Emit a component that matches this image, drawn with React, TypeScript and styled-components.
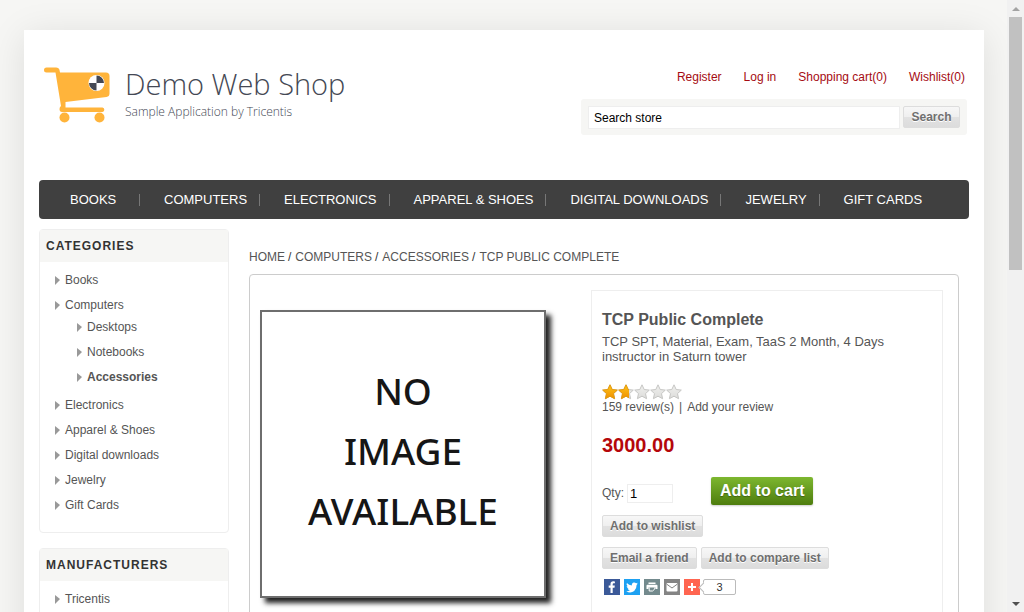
import React from "react";
import styled, { createGlobalStyle } from "styled-components";

const GlobalStyle = createGlobalStyle`
  * { box-sizing: border-box; }
  body {
    margin: 0;
    background: #f6f6f4;
    color: #555;
    font: 12px/15px "Liberation Sans", Arial, sans-serif;
  }
  a { color: inherit; text-decoration: none; }
  ul { list-style: none; margin: 0; padding: 0; }
  h1, h2, p { margin: 0; }
  button, input { font-family: inherit; }
`;

const Viewport = styled.div`
  display: flex;
  height: 100vh;
  overflow: hidden;
`;

const Page = styled.div`
  flex: 1;
  min-width: 0;
  padding: 30px 23px 0 24px;
`;

const Sheet = styled.div`
  min-height: 100%;
  padding: 0 15px;
  background: #fff;
  box-shadow: 0 5px 35px rgba(0, 0, 0, 0.1);
`;

const ScrollTrack = styled.div`
  position: relative;
  display: flex;
  flex-direction: column;
  align-items: center;
  flex: 0 0 17px;
  padding: 7px 0 6px;
  background: #f1f1f1;
`;

const ScrollThumb = styled.div`
  width: 13px;
  height: 253px;
  margin: 6px 0 auto;
  background: #c1c1c1;
`;

const Header = styled.header`
  display: flex;
  justify-content: space-between;
  height: 150px;
  padding: 0 2px 0 5px;
`;

const LogoLink = styled.a`
  display: flex;
  align-items: flex-start;
  gap: 15px;
  padding-top: 36px;
`;

const LogoText = styled.span`
  display: flex;
  flex-direction: column;
  font-family: "Open Sans", sans-serif;
  font-weight: 300;
`;

const LogoName = styled.span`
  font-size: 29px;
  line-height: 36px;
  color: #444854;
`;

const LogoTagline = styled.span`
  font-size: 12px;
  line-height: 20px;
  color: #444854;
`;

const HeaderTools = styled.div`
  flex: 0 0 386px;
  padding-top: 40px;
`;

const HeaderLinks = styled.ul`
  display: flex;
  justify-content: flex-end;
  gap: 22px;
  padding-right: 2px;
  color: #a50b12;
`;

const SearchForm = styled.form`
  display: flex;
  gap: 3px;
  margin-top: 14px;
  padding: 7px 7px 6px;
  background: #f6f6f4;
  border-radius: 3px;
`;

const SearchInput = styled.input`
  flex: 1;
  min-width: 0;
  height: 23px;
  margin: 0;
  padding: 0 5px;
  border: 1px solid #eee;
  background: #fff;
  color: #000;
  font-size: 12px;
`;

const GreyButton = styled.button`
  height: 22px;
  padding: 0 7px 1px;
  border: 1px solid #ddd;
  border-radius: 2px;
  background: linear-gradient(#f7f7f7, #efefef 49%, #e2e2e2 51%, #dcdcdc);
  color: #6f6f6f;
  font-size: 12px;
  font-weight: bold;
  text-shadow: 0 1px 0 #fff;
  white-space: nowrap;
`;

const SearchButton = styled(GreyButton)`
  width: 57px;
`;

const NavBar = styled.nav`
  padding: 0 7px;
  border-radius: 4px;
  background: #404040;
`;

const NavList = styled.ul`
  display: flex;
  height: 39px;
  align-items: center;
`;

const NavItem = styled.li`
  min-width: 94px;
  padding: 0 12px 0 24px;
  border-right: 1px solid #777;
  color: #fff;
  font-size: 13px;
  line-height: 12px;
  text-transform: uppercase;
  white-space: nowrap;

  &:last-child { border-right: 0; }
`;

const Body = styled.div`
  display: flex;
  gap: 20px;
  padding: 10px 10px 0 0;
`;

const Sidebar = styled.aside`
  display: flex;
  flex-direction: column;
  flex: 0 0 190px;
  gap: 15px;
`;

const Block = styled.section`
  border: 1px solid #eee;
  border-radius: 4px;
`;

const BlockTitle = styled.h2`
  padding: 0 6px;
  background: #f6f6f4;
  color: #333;
  font-size: 12px;
  line-height: 32px;
  letter-spacing: 1px;
  text-transform: uppercase;
`;

const BlockList = styled.ul`
  padding: 6px 15px 14px;
`;

const SubList = styled.ul`
  margin: -3px 0 3px;
  padding-left: 22px;
`;

const SideLink = styled.a<{ $active?: boolean }>`
  display: flex;
  align-items: center;
  gap: 5px;
  line-height: 25px;
  font-weight: ${(p) => (p.$active ? "bold" : "normal")};

  &::before {
    content: "";
    border: solid transparent;
    border-width: 4px 0 5px 5px;
    border-left-color: #999;
  }
`;

const Main = styled.main`
  flex: 1;
  min-width: 0;
`;

const Breadcrumb = styled.ul`
  display: flex;
  gap: 3px;
  padding: 21px 0 9px;
  text-transform: uppercase;

  li + li::before {
    content: "/";
    margin-right: 4px;
    color: #333;
  }
`;

const ProductBox = styled.article`
  display: flex;
  justify-content: space-between;
  min-height: 420px;
  padding: 15px 15px 0 10px;
  border: 1px solid #ccc;
  border-radius: 4px;
`;

const Placeholder = styled.div`
  display: flex;
  flex-direction: column;
  justify-content: center;
  flex: 0 0 286px;
  height: 288px;
  margin-top: 20px;
  padding-bottom: 6px;
  border: 2px solid #6e6e6e;
  box-shadow: 5px 5px 5px #222;
  background: #fff;
  color: #161616;
  font: 500 37px/60px "Comic Sans MS", "Noto Sans", sans-serif;
  text-align: center;
`;

const Details = styled.div`
  flex: 0 0 352px;
  padding: 19px 10px;
  border: 1px solid #eee;
`;

const ProductName = styled.h1`
  font-size: 16px;
  line-height: 20px;
`;

const Description = styled.p`
  margin-top: 4px;
  font-size: 13px;
  line-height: 15px;
`;

const Stars = styled.svg`
  display: block;
  margin-top: 20px;
`;

const Reviews = styled.p`
  display: flex;
  gap: 5px;
`;

const Price = styled.p`
  margin-top: 18px;
  color: #b5070b;
  font-size: 20px;
  font-weight: bold;
  line-height: 24px;
`;

const CartRow = styled.div`
  display: flex;
  align-items: center;
  margin-top: 20px;
`;

const QtyInput = styled.input`
  width: 46px;
  height: 19px;
  margin: 4px 38px 0 3px;
  padding: 0 2px;
  border: 1px solid #eee;
  color: #000;
  font-size: 13px;
`;

const QtyLabel = styled.label`
  padding-top: 4px;
`;

const CartButton = styled.button`
  height: 28px;
  padding: 0 9px 1px;
  border: 0;
  border-radius: 2px;
  background: linear-gradient(#7db72f, #4e7d0e);
  color: #fff;
  font-size: 16px;
  font-weight: bold;
  text-shadow: 0 1px 1px rgba(0, 0, 0, 0.3);
  white-space: nowrap;
  box-shadow: 0 1px 2px rgba(0, 0, 0, 0.2);
`;

const ButtonRow = styled.div`
  display: flex;
  gap: 4px;
  margin-top: 10px;
`;

const ShareRow = styled.div`
  display: flex;
  gap: 4px;
  padding: 0 2px;
  margin-top: 10px;
`;

const ShareLink = styled.a<{ $color: string }>`
  width: 16px;
  height: 16px;
  background: ${(p) => p.$color};

  svg { display: block; }
`;

const ShareCount = styled.span`
  position: relative;
  width: 33px;
  height: 16px;
  margin-left: -1px;
  border: 1px solid #bbb;
  border-radius: 2px;
  color: #333;
  font-size: 11px;
  line-height: 15px;
  text-align: center;

  &::before {
    content: "";
    position: absolute;
    top: 4px;
    left: -4px;
    width: 6px;
    height: 6px;
    border: solid #bbb;
    border-width: 0 0 1px 1px;
    background: #fff;
    transform: rotate(45deg);
  }
`;

const CartLogo = () => (
  <svg width="66" height="58" viewBox="0 0 66 58" aria-hidden="true">
    <g fill="#ffb43b">
      <path d="M2.500 1.500H12Q15 1.500 15.500 4L16 6.500H62Q65.500 6.500 65.500 10V27.500Q65.500 30.500 62.500 31L21.500 36V41.500H58.500A2.300 2.300 0 0 1 58.500 46H18Q15.500 46 15.500 43Q15.500 41 17 40L11.500 6.500H2.500A2.500 2.500 0 0 1 2.500 1.500Z" />
      <circle cx="20.500" cy="51.500" r="5" />
      <circle cx="55.500" cy="51.500" r="5" />
    </g>
    <circle cx="52.500" cy="17" r="8" fill="#fff" />
    <path d="M52.500 17V9.500A7.500 7.500 0 0 1 60 17ZM52.500 17V24.500A7.500 7.500 0 0 1 45 17Z" fill="#444854" />
  </svg>
);

const STAR = "M8 .8L10.200 5.500L15.300 6.100L11.500 9.600L12.600 14.700L8 12.200L3.400 14.700L4.500 9.600L.7 6.100L5.800 5.500Z";

const StarRow = ({ fill, stroke }: { fill: string; stroke: string }) => (
  <g fill={fill} stroke={stroke} strokeWidth="1" strokeLinejoin="round">
    {[0, 16, 32, 48, 64].map((x) => (
      <path key={x} d={STAR} transform={`translate(${x} 0)`} />
    ))}
  </g>
);

const Rating = () => (
  <Stars width="80" height="16" viewBox="0 0 80 16" role="img" aria-label="Rating">
    <defs>
      <linearGradient id="gold" x1="0" y1="0" x2="0" y2="1">
        <stop offset="0" stopColor="#ffc61a" />
        <stop offset="1" stopColor="#ef8f00" />
      </linearGradient>
      <linearGradient id="silver" x1="0" y1="0" x2="0" y2="1">
        <stop offset="0" stopColor="#f0f0ee" />
        <stop offset="1" stopColor="#dcdcda" />
      </linearGradient>
      <clipPath id="score"><rect width="27" height="16" /></clipPath>
    </defs>
    <StarRow fill="url(#silver)" stroke="#c6c6c4" />
    <g clipPath="url(#score)"><StarRow fill="url(#gold)" stroke="#e59a0c" /></g>
  </Stars>
);

const shares = [
  {
    name: "Facebook", color: "#3b5998",
    art: <path fill="#fff" d="M8.700 14V8.700H10.500L10.800 6.600H8.700V5.300Q8.700 4.300 9.700 4.300H10.900V2.400Q10 2.200 9.200 2.200Q6.500 2.200 6.500 5V6.600H4.700V8.700H6.500V14Z" />,
  },
  {
    name: "Twitter", color: "#1da1f2",
    art: <path fill="#fff" d="M13.800 4.600Q13.200 4.900 12.500 5Q13.200 4.500 13.500 3.700Q12.800 4.100 12 4.200Q11.200 3.300 10 3.400Q7.600 3.800 7.800 6.500Q4.900 6.400 2.900 4Q1.900 6 3.700 7.300Q3.100 7.300 2.600 7Q2.700 8.900 4.600 9.500Q4.100 9.600 3.600 9.500Q4.100 11 5.900 11.200Q4.300 12.400 2.200 12.200Q6.500 14.700 10.200 12Q12.700 9.900 12.600 6Q13.300 5.500 13.800 4.600Z" />,
  },
  {
    name: "Print", color: "#738a8d",
    art: (
      <g>
        <path fill="#fff" d="M4.500 3.500H11.500V5H4.500ZM3.500 5.700H12.500Q13.500 5.700 13.500 6.700V10H11.500V8.500H4.500V10H2.500V6.700Q2.500 5.700 3.500 5.700Z" />
        <path fill="none" stroke="#fff" d="M5.200 8.500V12H8.500L10.800 10V8.500" />
      </g>
    ),
  },
  {
    name: "Email", color: "#848484",
    art: (
      <g>
        <rect x="2.500" y="4" width="11" height="8.500" rx="1" fill="#fff" />
        <path d="M2.500 5L8 9L13.500 5" fill="none" stroke="#848484" />
      </g>
    ),
  },
  {
    name: "More", color: "#ff6550",
    art: <path d="M8 4V12M4 8H12" stroke="#fff" strokeWidth="2" />,
  },
];

const Arrow = ({ down }: { down?: boolean }) => (
  <svg width="8" height="4" viewBox="0 0 8 4" aria-hidden="true">
    <path d={down ? "M0 0H8L4 4Z" : "M4 0L8 4H0Z"} fill={down ? "#505050" : "#a3a3a3"} />
  </svg>
);

const navItems = ["Books", "Computers", "Electronics", "Apparel & Shoes", "Digital downloads", "Jewelry", "Gift Cards"];

const categories: { name: string; children?: string[] }[] = navItems.map((name) =>
  name === "Computers" ? { name, children: ["Desktops", "Notebooks", "Accessories"] } : { name }
);

export default function App() {
  return (
    <>
      <GlobalStyle />
      <Viewport>
        <Page>
          <Sheet>
            <Header>
              <LogoLink href="#">
                <CartLogo />
                <LogoText>
                  <LogoName>Demo Web Shop</LogoName>
                  <LogoTagline>Sample Application by Tricentis</LogoTagline>
                </LogoText>
              </LogoLink>
              <HeaderTools>
                <HeaderLinks>
                  {["Register", "Log in", "Shopping cart(0)", "Wishlist(0)"].map((t) => (
                    <li key={t}><a href="#">{t}</a></li>
                  ))}
                </HeaderLinks>
                <SearchForm>
                  <SearchInput type="text" defaultValue="Search store" aria-label="Search store" />
                  <SearchButton type="button">Search</SearchButton>
                </SearchForm>
              </HeaderTools>
            </Header>
            <NavBar>
              <NavList>
                {navItems.map((t) => (
                  <NavItem key={t}><a href="#">{t}</a></NavItem>
                ))}
              </NavList>
            </NavBar>
            <Body>
              <Sidebar>
                <Block>
                  <BlockTitle>Categories</BlockTitle>
                  <BlockList>
                    {categories.map((c) => (
                      <li key={c.name}>
                        <SideLink href="#">{c.name}</SideLink>
                        {c.children && (
                          <SubList>
                            {c.children.map((s) => (
                              <li key={s}><SideLink href="#" $active={s === "Accessories"}>{s}</SideLink></li>
                            ))}
                          </SubList>
                        )}
                      </li>
                    ))}
                  </BlockList>
                </Block>
                <Block>
                  <BlockTitle>Manufacturers</BlockTitle>
                  <BlockList>
                    <li><SideLink href="#">Tricentis</SideLink></li>
                  </BlockList>
                </Block>
              </Sidebar>
              <Main>
                <Breadcrumb>
                  {["Home", "Computers", "Accessories", "TCP Public Complete"].map((t) => (
                    <li key={t}><a href="#">{t}</a></li>
                  ))}
                </Breadcrumb>
                <ProductBox>
                  <Placeholder>
                    <span>NO</span>
                    <span>IMAGE</span>
                    <span>AVAILABLE</span>
                  </Placeholder>
                  <Details>
                    <ProductName>TCP Public Complete</ProductName>
                    <Description>TCP SPT, Material, Exam, TaaS 2 Month, 4 Days instructor in Saturn tower</Description>
                    <Rating />
                    <Reviews>
                      <a href="#">159 review(s)</a>
                      <span>|</span>
                      <a href="#">Add your review</a>
                    </Reviews>
                    <Price>3000.00</Price>
                    <CartRow>
                      <QtyLabel htmlFor="qty">Qty:</QtyLabel>
                      <QtyInput id="qty" type="text" defaultValue="1" />
                      <CartButton type="button">Add to cart</CartButton>
                    </CartRow>
                    <ButtonRow>
                      <GreyButton type="button">Add to wishlist</GreyButton>
                    </ButtonRow>
                    <ButtonRow>
                      <GreyButton type="button">Email a friend</GreyButton>
                      <GreyButton type="button">Add to compare list</GreyButton>
                    </ButtonRow>
                    <ShareRow>
                      {shares.map((s) => (
                        <ShareLink key={s.name} href="#" $color={s.color} aria-label={s.name}>
                          <svg width="16" height="16" viewBox="0 0 16 16">{s.art}</svg>
                        </ShareLink>
                      ))}
                      <ShareCount>3</ShareCount>
                    </ShareRow>
                  </Details>
                </ProductBox>
              </Main>
            </Body>
          </Sheet>
        </Page>
        <ScrollTrack>
          <Arrow />
          <ScrollThumb />
          <Arrow down />
        </ScrollTrack>
      </Viewport>
    </>
  );
}
